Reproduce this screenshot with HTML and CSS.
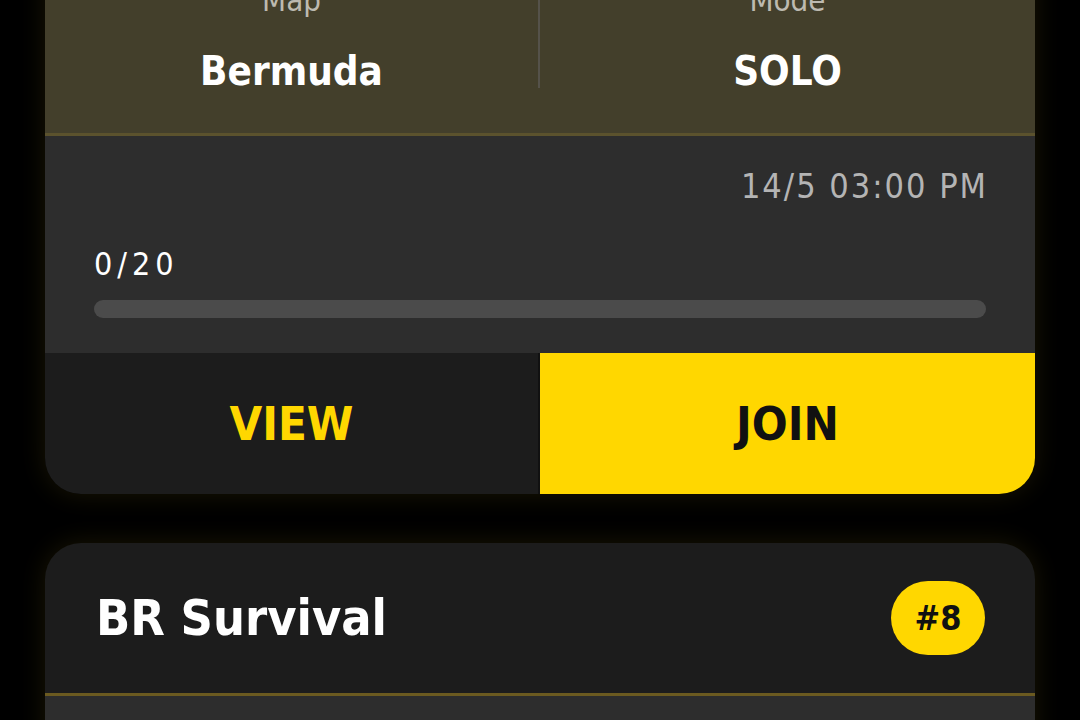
FILE: index.html
```html
<!DOCTYPE html>
<html>
<head>
<meta charset="utf-8">
<link rel="stylesheet" href="styles.css">
</head>
<body>
<div class="list">
  <div class="card card-top">
    <div class="info">
      <div class="cell cell-left">
        <div class="label">Map</div>
        <div class="value">Bermuda</div>
      </div>
      <div class="cell">
        <div class="label">Mode</div>
        <div class="value">SOLO</div>
      </div>
    </div>
    <div class="details">
      <div class="date">14/5 03:00 PM</div>
      <div class="count">0/20</div>
      <div class="bar"><div class="fill" style="width:0%"></div></div>
    </div>
    <div class="actions">
      <div class="btn btn-view">VIEW</div>
      <div class="btn btn-join">JOIN</div>
    </div>
  </div>

  <div class="card card-next">
    <div class="head">
      <div class="title">BR Survival</div>
      <div class="badge">#8</div>
    </div>
    <div class="details details-next"></div>
  </div>
</div>
</body>
</html>
```

FILE: styles.css
```css
* { box-sizing: border-box; }
html, body {
  margin: 0;
  padding: 0;
  background: #000;
  overflow: hidden;
  height: 720px;
}
body {
  font-family: "DejaVu Sans Condensed", "DejaVu Sans", sans-serif;
  color: #fff;
}
.list {
  height: 720px;
  overflow: hidden;
  padding: 0 45px;
  display: flex;
  flex-direction: column;
  gap: 49px;
}
.card {
  flex: none;
  border-radius: 36px;
  overflow: hidden;
  box-shadow: 0 0 26px rgba(120, 100, 20, 0.22);
}
.card-top {
  margin-top: -50px;
  border-top-left-radius: 0;
  border-top-right-radius: 0;
}
.info {
  background: #433f2b;
  display: grid;
  grid-template-columns: 1fr 1fr;
  padding: 32px 0 45px;
  border-bottom: 3px solid #5b522d;
}
.cell {
  display: flex;
  flex-direction: column;
  align-items: center;
  gap: 36px;
}
.cell-left {
  border-right: 2px solid #55524a;
}
.label {
  font-size: 31px;
  line-height: 36px;
  color: #bdbab0;
}
.value {
  font-size: 40px;
  line-height: 34px;
  font-weight: bold;
  color: #fff;
}
.details {
  background: #2d2d2d;
  padding: 28px 49px 35px;
  display: flex;
  flex-direction: column;
}
.date {
  align-self: flex-end;
  font-size: 34px;
  line-height: 44px;
  letter-spacing: 2px;
  margin-right: -2px;
  color: #b4b4b4;
}
.count {
  margin-top: 36px;
  font-size: 32px;
  line-height: 40px;
  letter-spacing: 5px;
  color: #fff;
}
.bar {
  margin-top: 16px;
  height: 18px;
  border-radius: 9px;
  background: #4b4b4b;
}
.fill {
  height: 100%;
  background: #ffd700;
  border-radius: 9px;
}
.actions {
  display: grid;
  grid-template-columns: 1fr 1fr;
  height: 141px;
}
.btn {
  display: flex;
  align-items: center;
  justify-content: center;
  font-size: 47px;
  font-weight: bold;
}
.btn-view {
  background: #1c1c1c;
  color: #ffd700;
  border-right: 2px solid #111;
}
.btn-join {
  background: #ffd700;
  color: #111;
}
.card-next {
  background: #1c1c1c;
  border-bottom-left-radius: 0;
  border-bottom-right-radius: 0;
}
.head {
  display: flex;
  align-items: center;
  justify-content: space-between;
  padding: 38px 50px 38px 51px;
  border-bottom: 3px solid #6b5a20;
}
.title {
  font-size: 50px;
  font-weight: bold;
  color: #fff;
}
.badge {
  width: 94px;
  height: 74px;
  border-radius: 37px;
  background: #ffd700;
  color: #111;
  font-weight: bold;
  font-size: 34px;
  display: flex;
  align-items: center;
  justify-content: center;
}
.details-next {
  height: 60px;
}
```
